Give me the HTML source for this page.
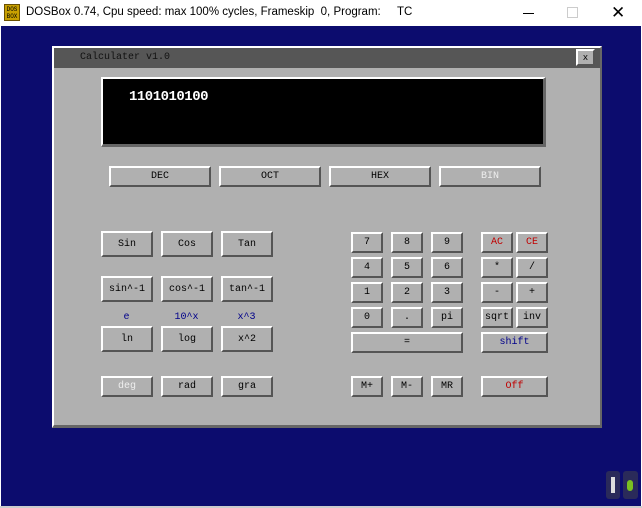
<!DOCTYPE html>
<html><head><style>
*{margin:0;padding:0;box-sizing:border-box}
body{width:642px;height:508px;position:relative;overflow:hidden;background:#fff;font-family:"Liberation Mono",monospace}
.a{position:absolute}
#tb{left:0;top:0;width:642px;height:26px;background:#fff;font-family:"Liberation Sans",sans-serif;font-size:11.5px;color:#000}
#bg{left:1px;top:26px;width:640px;height:480px;background:#0c0c6e}
#win{left:52px;top:46px;width:550px;height:382px;background:#b0b0b0;border-left:2px solid #fff;border-top:2px solid #fff;border-right:2px solid #666;border-bottom:3px solid #666}
#tt{left:54px;top:48px;width:546px;height:20px;background:#565656;color:#111;font-size:10px;line-height:20px;padding-left:26px}
#disp{left:101px;top:77px;width:445px;height:70px;background:#000;border-left:2px solid #fff;border-top:2px solid #fff;border-right:3px solid #666;border-bottom:3px solid #666;color:#fff;font-size:14px;font-weight:bold;padding:10px 0 0 26px;letter-spacing:-0.5px}
.b{position:absolute;background:#b0b0b0;border-left:2px solid #fff;border-top:2px solid #fff;border-right:2px solid #555;border-bottom:2px solid #555;font-size:10px;text-align:center;color:#000;display:flex;align-items:center;justify-content:center}
.l{position:absolute;font-size:10px;color:#00008a;text-align:center;width:51px}
</style></head><body>
<div class="a" id="tb">
<div class="a" style="left:4px;top:4px;width:16px;height:17px;background:#c8a000;border:1px solid #6a5000;font-size:6px;line-height:7px;color:#000;font-family:'Liberation Mono';text-align:center;padding-top:1px">DOS<br>BOX</div>
<div class="a" style="left:26px;top:6px;white-space:nowrap">DOSBox 0.74, Cpu speed: max 100% cycles, Frameskip&nbsp; 0, Program:</div>
<div class="a" style="left:397px;top:6px">TC</div>
<div class="a" style="left:523px;top:13px;width:11px;height:1px;background:#000"></div>
<div class="a" style="left:567px;top:7px;width:11px;height:11px;border:1px solid #ccc"></div>
<div class="a" style="left:611px;top:3px;font-size:17px;font-weight:300">✕</div>
</div>
<div class="a" id="bg"></div>
<div class="a" style="left:0;top:506px;width:642px;height:2px;background:#ccc"></div>
<div class="a" style="left:606px;top:471px;width:14px;height:28px;background:#2a2a5a;border-radius:3px"></div>
<div class="a" style="left:611px;top:477px;width:4px;height:16px;background:#ddd"></div>
<div class="a" style="left:623px;top:471px;width:15px;height:28px;background:#2a2a5a;border-radius:3px"></div>
<div class="a" style="left:627px;top:480px;width:6px;height:11px;background:#7ac020;border-radius:3px"></div>
<div class="a" id="win"></div>
<div class="a" id="tt">Calculater v1.0</div>
<div class="b" style="left:576px;top:49px;width:19px;height:17px;font-size:9px">x</div>
<div class="a" id="disp">1101010100</div>

<div class="b" style="left:109px;top:166px;width:102px;height:21px">DEC</div>
<div class="b" style="left:219px;top:166px;width:102px;height:21px">OCT</div>
<div class="b" style="left:329px;top:166px;width:102px;height:21px">HEX</div>
<div class="b" style="left:439px;top:166px;width:102px;height:21px;color:#eee">BIN</div>

<div class="b" style="left:101px;top:231px;width:52px;height:26px">Sin</div>
<div class="b" style="left:161px;top:231px;width:52px;height:26px">Cos</div>
<div class="b" style="left:221px;top:231px;width:52px;height:26px">Tan</div>
<div class="b" style="left:101px;top:276px;width:52px;height:26px">sin^-1</div>
<div class="b" style="left:161px;top:276px;width:52px;height:26px">cos^-1</div>
<div class="b" style="left:221px;top:276px;width:52px;height:26px">tan^-1</div>
<div class="l" style="left:101px;top:312px">e</div>
<div class="l" style="left:161px;top:312px">10^x</div>
<div class="l" style="left:221px;top:312px">x^3</div>
<div class="b" style="left:101px;top:326px;width:52px;height:26px">ln</div>
<div class="b" style="left:161px;top:326px;width:52px;height:26px">log</div>
<div class="b" style="left:221px;top:326px;width:52px;height:26px">x^2</div>
<div class="b" style="left:101px;top:376px;width:52px;height:21px;color:#eee">deg</div>
<div class="b" style="left:161px;top:376px;width:52px;height:21px">rad</div>
<div class="b" style="left:221px;top:376px;width:52px;height:21px">gra</div>

<div class="b" style="left:351px;top:232px;width:32px;height:21px">7</div>
<div class="b" style="left:391px;top:232px;width:32px;height:21px">8</div>
<div class="b" style="left:431px;top:232px;width:32px;height:21px">9</div>
<div class="b" style="left:351px;top:257px;width:32px;height:21px">4</div>
<div class="b" style="left:391px;top:257px;width:32px;height:21px">5</div>
<div class="b" style="left:431px;top:257px;width:32px;height:21px">6</div>
<div class="b" style="left:351px;top:282px;width:32px;height:21px">1</div>
<div class="b" style="left:391px;top:282px;width:32px;height:21px">2</div>
<div class="b" style="left:431px;top:282px;width:32px;height:21px">3</div>
<div class="b" style="left:351px;top:307px;width:32px;height:21px">0</div>
<div class="b" style="left:391px;top:307px;width:32px;height:21px">.</div>
<div class="b" style="left:431px;top:307px;width:32px;height:21px">pi</div>
<div class="b" style="left:351px;top:332px;width:112px;height:21px">=</div>
<div class="b" style="left:481px;top:232px;width:32px;height:21px;color:#c00000">AC</div>
<div class="b" style="left:516px;top:232px;width:32px;height:21px;color:#c00000">CE</div>
<div class="b" style="left:481px;top:257px;width:32px;height:21px">*</div>
<div class="b" style="left:516px;top:257px;width:32px;height:21px">/</div>
<div class="b" style="left:481px;top:282px;width:32px;height:21px">-</div>
<div class="b" style="left:516px;top:282px;width:32px;height:21px">+</div>
<div class="b" style="left:481px;top:307px;width:32px;height:21px">sqrt</div>
<div class="b" style="left:516px;top:307px;width:32px;height:21px">inv</div>
<div class="b" style="left:481px;top:332px;width:67px;height:21px;color:#00008a">shift</div>
<div class="b" style="left:351px;top:376px;width:32px;height:21px">M+</div>
<div class="b" style="left:391px;top:376px;width:32px;height:21px">M-</div>
<div class="b" style="left:431px;top:376px;width:32px;height:21px">MR</div>
<div class="b" style="left:481px;top:376px;width:67px;height:21px;color:#c00000">Off</div>
</body></html>
